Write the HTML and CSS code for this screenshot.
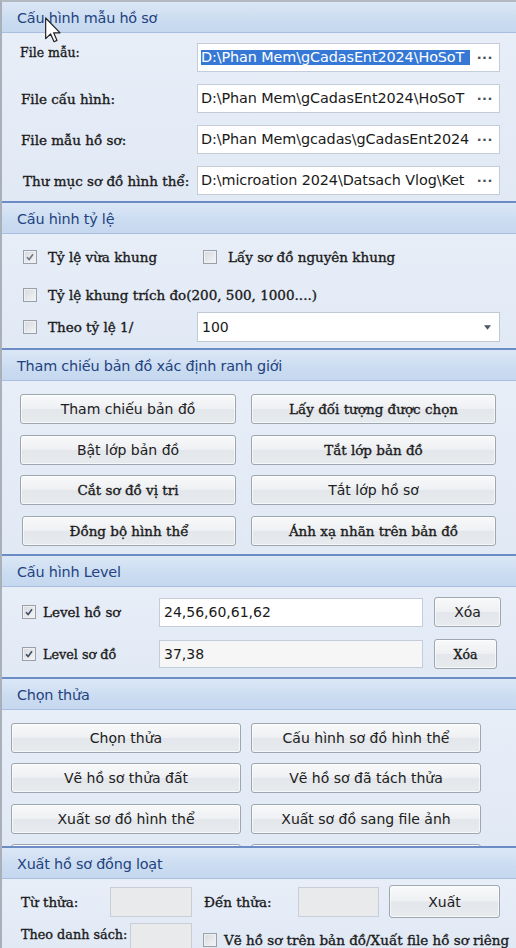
FILE: index.html
```html
<!DOCTYPE html>
<html lang="vi">
<head>
<meta charset="utf-8">
<title>Cấu hình</title>
<link rel="stylesheet" href="styles.css">
</head>
<body>
<div class="panel">

  <section class="group">
    <div class="ghead">Cấu hình mẫu hồ sơ</div>
    <div class="gbody files">
      <label class="lbl first">File mẫu:</label>
      <div class="path"><span class="ptext"><span class="sel">D:\Phan Mem\gCadasEnt2024\HoSoT</span></span><span class="dots">···</span></div>
      <label class="lbl">File cấu hình:</label>
      <div class="path"><span class="ptext">D:\Phan Mem\gCadasEnt2024\HoSoT</span><span class="dots">···</span></div>
      <label class="lbl">File mẫu hồ sơ:</label>
      <div class="path"><span class="ptext">D:\Phan Mem\gcadas\gCadasEnt2024</span><span class="dots">···</span></div>
      <label class="lbl last">Thư mục sơ đồ hình thể:</label>
      <div class="path"><span class="ptext">D:\microation 2024\Datsach Vlog\Ket</span><span class="dots">···</span></div>
    </div>
  </section>

  <section class="group">
    <div class="ghead">Cấu hình tỷ lệ</div>
    <div class="gbody scale">
      <div class="srow r1">
        <div class="citem w1"><span class="chk on faint"><svg viewBox="0 0 14 14"><path d="M3.5 7.2 L6 10 L10.5 3.8" /></svg></span><span class="ctext">Tỷ lệ vừa khung</span></div>
        <div class="citem"><span class="chk"></span><span class="ctext">Lấy sơ đồ nguyên khung</span></div>
      </div>
      <div class="srow r2">
        <div class="citem"><span class="chk"></span><span class="ctext">Tỷ lệ khung trích đo(200, 500, 1000....)</span></div>
      </div>
      <div class="srow r3">
        <div class="citem w3"><span class="chk"></span><span class="ctext">Theo tỷ lệ 1/</span></div>
        <div class="combo"><span class="cval">100</span><svg class="arrow" viewBox="0 0 8 5"><path d="M0 0 H8 L4 5 Z"/></svg></div>
      </div>
    </div>
  </section>

  <section class="group">
    <div class="ghead">Tham chiếu bản đồ xác định ranh giới</div>
    <div class="gbody btns map">
      <button class="btn">Tham chiếu bản đồ</button>
      <button class="btn serif">Lấy đối tượng được chọn</button>
      <button class="btn">Bật lớp bản đồ</button>
      <button class="btn serif">Tắt lớp bản đồ</button>
      <button class="btn serif">Cắt sơ đồ vị tri</button>
      <button class="btn">Tắt lớp hồ sơ</button>
      <button class="btn serif shift">Đồng bộ hình thể</button>
      <button class="btn serif">Ánh xạ nhãn trên bản đồ</button>
    </div>
  </section>

  <section class="group">
    <div class="ghead">Cấu hình Level</div>
    <div class="gbody levels">
      <div class="lrow">
        <div class="citem"><span class="chk on"><svg viewBox="0 0 14 14"><path d="M3.5 7.2 L6 10 L10.5 3.8" /></svg></span><span class="ctext tight">Level hồ sơ</span></div>
        <div class="field white">24,56,60,61,62</div>
        <button class="btn xoa">Xóa</button>
      </div>
      <div class="lrow second">
        <div class="citem"><span class="chk on"><svg viewBox="0 0 14 14"><path d="M3.5 7.2 L6 10 L10.5 3.8" /></svg></span><span class="ctext tight small">Level sơ đồ</span></div>
        <div class="field soft">37,38</div>
        <button class="btn xoa narrow serif">Xóa</button>
      </div>
    </div>
  </section>

  <section class="group">
    <div class="ghead">Chọn thửa</div>
    <div class="gbody btns parcel">
      <button class="btn">Chọn thửa</button>
      <button class="btn">Cấu hình sơ đồ hình thể</button>
      <button class="btn">Vẽ hồ sơ thửa đất</button>
      <button class="btn">Vẽ hồ sơ đã tách thửa</button>
      <button class="btn">Xuất sơ đồ hình thể</button>
      <button class="btn">Xuất sơ đồ sang file ảnh</button>
      <button class="btn"></button>
      <button class="btn"></button>
    </div>
  </section>

  <section class="group">
    <div class="ghead">Xuất hồ sơ đồng loạt</div>
    <div class="gbody batch">
      <div class="brow one">
        <span class="lbl l-from">Từ thửa:</span>
        <span class="field gray f-from"></span>
        <span class="lbl l-to">Đến thửa:</span>
        <span class="field gray f-to"></span>
        <button class="btn export">Xuất</button>
      </div>
      <div class="brow two">
        <span class="lbl l-list small">Theo danh sách:</span>
        <span class="field gray f-list"></span>
        <div class="citem draw"><span class="chk"></span><span class="ctext">Vẽ hồ sơ trên bản đồ/Xuất file hồ sơ riêng</span></div>
      </div>
    </div>
  </section>

  <svg class="cursor" viewBox="0 0 12 19" aria-hidden="true">
    <path d="M0.5 0.5 L0.5 16 L4.2 12.5 L6.8 18.3 L9 17.3 L6.5 11.6 L11.3 11.6 Z"/>
  </svg>
</div>
</body>
</html>
```

FILE: styles.css
```css
* { box-sizing: border-box; }

html, body {
  margin: 0;
  padding: 0;
}

body {
  width: 516px;
  height: 948px;
  overflow: hidden;
  background: #e4ecf7;
  font-family: "DejaVu Sans", "Noto Sans", sans-serif;
  color: #1c1c1c;
}

.panel {
  position: relative;
  height: 948px;
  overflow: hidden;
  border-top: 2px solid #b3b9c1;
  border-left: 2px solid #a9b0b9;
  background: #e4ecf7;
}

.group + .group {
  border-top: 2px solid #6b8cc4;
}

.ghead {
  height: 31px;
  display: flex;
  align-items: center;
  padding-left: 15px;
  padding-top: 2px;
  background: linear-gradient(#dbe7f6, #cbdcf1 60%, #c5d8ef);
  border-bottom: 1px solid #a8bfdf;
  color: #23427f;
  font-size: 14.4px;
  letter-spacing: -0.2px;
}

.gbody {
  background: linear-gradient(#e7eef8, #e1e9f5);
}

/* ---------- serif text (labels) ---------- */
.lbl,
.ctext,
.btn.serif {
  font-family: "DejaVu Serif", "Liberation Serif", serif;
  font-weight: normal;
  font-size: 13.5px;
  color: #1a1a1a;
  -webkit-text-stroke: 0.35px #1a1a1a;
  white-space: nowrap;
}

/* ---------- section 1 ---------- */
.files {
  height: 168px;
  display: grid;
  grid-template-columns: 176px 303px;
  grid-auto-rows: 29px;
  row-gap: 12px;
  align-items: center;
  padding: 10px 0 0 19px;
}

.lbl.first { align-self: start; padding-top: 2px; margin-left: -1px; font-size: 12.5px; }
.lbl.last { margin-left: 2px; }

.path {
  height: 29px;
  display: flex;
  align-items: center;
  padding-left: 3px;
  background: #fff;
  border: 1px solid #c3ccd8;
}

.ptext {
  display: block;
  width: 269px;
  overflow: hidden;
  white-space: nowrap;
  font-size: 14.4px;
  line-height: 15px;
  letter-spacing: -0.1px;
  color: #1a1a1a;
}

.sel {
  display: block;
  background: #3678d6;
  color: #fff;
}

.dots {
  margin-left: auto;
  margin-right: 6px;
  font-weight: bold;
  font-size: 13px;
  letter-spacing: 0.5px;
  color: #4a4f57;
}

/* ---------- section 2 ---------- */
.scale {
  height: 114px;
  display: flex;
  flex-direction: column;
  padding: 12px 0 0 21px;
}

.srow {
  display: flex;
  align-items: center;
}
.r1 { height: 22px; }
.r2 { height: 22px; margin-top: 16px; }
.r3 { height: 30px; margin-top: 6px; }

.citem {
  display: flex;
  align-items: center;
  flex: none;
}
.w1 { width: 180px; }
.w3 { width: 174px; }

.chk {
  width: 14px;
  height: 14px;
  flex: none;
  border: 1px solid #9aa0a8;
  background: linear-gradient(135deg, #d6d9de, #f4f5f7);
  box-shadow: inset 0 0 0 1px #eef0f3;
  display: flex;
}
.chk svg {
  width: 12px;
  height: 12px;
  fill: none;
  stroke: #3f4b63;
  stroke-width: 1.8;
}
.chk.faint svg { stroke: #6b7482; }

.ctext { margin-left: 11px; }
.ctext.tight { margin-left: 7px; }
.small { font-size: 12.8px !important; }

.combo {
  width: 303px;
  height: 30px;
  flex: none;
  background: #fff;
  border: 1px solid #c0c9d6;
  display: flex;
  align-items: center;
  padding: 0 8px 0 4px;
}
.cval {
  font-size: 14px;
  color: #1a1a1a;
}
.arrow {
  margin-left: auto;
  width: 7px;
  height: 5px;
  fill: #4d5661;
}

/* ---------- buttons ---------- */
.btn {
  height: 30px;
  margin: 0;
  padding: 0;
  border: 1px solid #9ea6b0;
  border-radius: 3px;
  background: linear-gradient(#f8f9fa, #eef0f3 48%, #e3e6ea 52%, #e8ebee);
  box-shadow: inset 0 0 0 1px rgba(255,255,255,0.6);
  font-family: "DejaVu Sans", "Noto Sans", sans-serif;
  font-size: 14px;
  color: #202020;
  white-space: nowrap;
}

.btns {
  display: grid;
  grid-auto-rows: 30px;
}

.map {
  height: 173px;
  grid-template-columns: 216px 245px;
  column-gap: 15px;
  row-gap: 10.67px;
  padding: 13px 0 0 18px;
}
.map .shift { margin-left: 2px; }

.parcel {
  height: 136px;
  overflow: hidden;
  grid-template-columns: 230px 230px;
  column-gap: 10px;
  row-gap: 10.3px;
  padding: 13px 0 0 9px;
}

/* ---------- section 4 ---------- */
.levels {
  height: 90px;
  display: flex;
  flex-direction: column;
  gap: 12px;
  padding: 10px 0 0 20px;
}
.lrow {
  height: 30px;
  display: grid;
  grid-template-columns: 137px 264px 78px;
  align-items: center;
  justify-content: start;
}
.lrow.second {
  grid-template-columns: 137px 264px 74px;
}

.field {
  height: 29px;
  display: flex;
  align-items: center;
  padding-left: 4px;
  border: 1px solid #c3ccd8;
  font-size: 14px;
  color: #1a1a1a;
}
.field.white { background: #fff; }
.field.soft { background: #f6f6f6; height: 28px; }

.btn.xoa { margin-left: 11px; width: 67px; }
.btn.xoa.narrow { width: 63px; font-size: 12.5px; }

/* ---------- section 6 ---------- */
.batch {
  height: 70px;
  padding: 6px 0 0 19px;
}
.brow {
  display: flex;
  align-items: center;
}
.brow > * { flex: none; }
.brow.one { height: 33px; }
.brow.two { height: 30px; margin-top: 5px; align-items: flex-start; }

.field.gray {
  background: #e9eaec;
  border-color: #c9ced6;
  height: 30px;
}
.l-from { width: 89px; }
.f-from { width: 82px; }
.l-to { width: 94px; margin-left: 12px; }
.f-to { width: 81px; }
.btn.export { margin-left: 10px; width: 111px; height: 33px; font-size: 14px; }

.two .lbl { padding-top: 4px; }
.l-list { width: 109px; }
.f-list { width: 62px; }
.draw { margin-left: 11px; padding-top: 9px; }
.draw .ctext { margin-left: 7px; }

/* ---------- cursor overlay ---------- */
.cursor {
  position: absolute;
  left: 43px;
  top: 15px;
  width: 16px;
  height: 26px;
  fill: #fff;
  stroke: #222;
  stroke-width: 0.9;
  stroke-linejoin: round;
}
```
